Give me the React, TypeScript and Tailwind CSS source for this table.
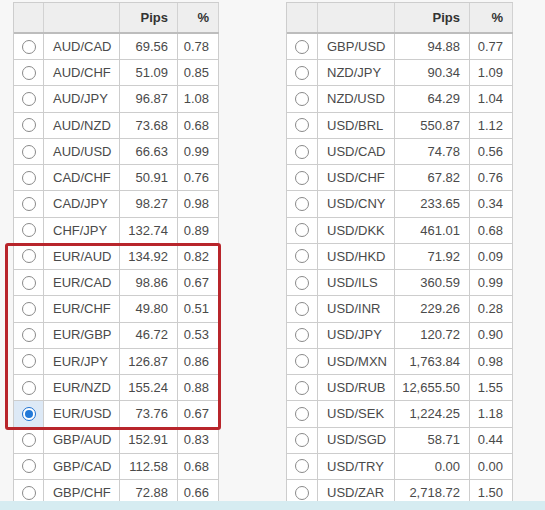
import React from "react";

type Row = { pair: string; pips: string; pct: string };

const left: Row[] = [
  { pair: "AUD/CAD", pips: "69.56", pct: "0.78" },
  { pair: "AUD/CHF", pips: "51.09", pct: "0.85" },
  { pair: "AUD/JPY", pips: "96.87", pct: "1.08" },
  { pair: "AUD/NZD", pips: "73.68", pct: "0.68" },
  { pair: "AUD/USD", pips: "66.63", pct: "0.99" },
  { pair: "CAD/CHF", pips: "50.91", pct: "0.76" },
  { pair: "CAD/JPY", pips: "98.27", pct: "0.98" },
  { pair: "CHF/JPY", pips: "132.74", pct: "0.89" },
  { pair: "EUR/AUD", pips: "134.92", pct: "0.82" },
  { pair: "EUR/CAD", pips: "98.86", pct: "0.67" },
  { pair: "EUR/CHF", pips: "49.80", pct: "0.51" },
  { pair: "EUR/GBP", pips: "46.72", pct: "0.53" },
  { pair: "EUR/JPY", pips: "126.87", pct: "0.86" },
  { pair: "EUR/NZD", pips: "155.24", pct: "0.88" },
  { pair: "EUR/USD", pips: "73.76", pct: "0.67" },
  { pair: "GBP/AUD", pips: "152.91", pct: "0.83" },
  { pair: "GBP/CAD", pips: "112.58", pct: "0.68" },
  { pair: "GBP/CHF", pips: "72.88", pct: "0.66" },
];

const right: Row[] = [
  { pair: "GBP/USD", pips: "94.88", pct: "0.77" },
  { pair: "NZD/JPY", pips: "90.34", pct: "1.09" },
  { pair: "NZD/USD", pips: "64.29", pct: "1.04" },
  { pair: "USD/BRL", pips: "550.87", pct: "1.12" },
  { pair: "USD/CAD", pips: "74.78", pct: "0.56" },
  { pair: "USD/CHF", pips: "67.82", pct: "0.76" },
  { pair: "USD/CNY", pips: "233.65", pct: "0.34" },
  { pair: "USD/DKK", pips: "461.01", pct: "0.68" },
  { pair: "USD/HKD", pips: "71.92", pct: "0.09" },
  { pair: "USD/ILS", pips: "360.59", pct: "0.99" },
  { pair: "USD/INR", pips: "229.26", pct: "0.28" },
  { pair: "USD/JPY", pips: "120.72", pct: "0.90" },
  { pair: "USD/MXN", pips: "1,763.84", pct: "0.98" },
  { pair: "USD/RUB", pips: "12,655.50", pct: "1.55" },
  { pair: "USD/SEK", pips: "1,224.25", pct: "1.18" },
  { pair: "USD/SGD", pips: "58.71", pct: "0.44" },
  { pair: "USD/TRY", pips: "0.00", pct: "0.00" },
  { pair: "USD/ZAR", pips: "2,718.72", pct: "1.50" },
];

function Radio({ checked }: { checked?: boolean }) {
  return checked ? (
    <span className="flex h-[14px] w-[14px] items-center justify-center rounded-full border border-[#1b6fd1] bg-white">
      <span className="h-[8px] w-[8px] rounded-full bg-[#2279d8]" />
    </span>
  ) : (
    <span className="h-[14px] w-[14px] rounded-full border border-[#8a8a8a] bg-white" />
  );
}

function PairTable({ rows, cols, selected }: { rows: Row[]; cols: string; selected?: string }) {
  return (
    <div className="border-l border-t border-[#cdcdcd] bg-white">
      <div className={`grid ${cols} h-[31px] border-b-2 border-[#bdbdbd] bg-[#eeeeee] font-bold text-[#333]`}>
        <div className="border-r border-[#d2d2d2]" />
        <div className="border-r border-[#d2d2d2]" />
        <div className="flex items-center justify-end border-r border-[#d2d2d2] px-[9px]">Pips</div>
        <div className="flex items-center justify-end border-r border-[#d2d2d2] px-[9px]">%</div>
      </div>
      {rows.map((r) => {
        const on = r.pair === selected;
        return (
          <div key={r.pair} className={`grid ${cols} h-[26.24px] border-b border-[#cdcdcd]`}>
            <div className={`flex items-center justify-center border-r border-[#cdcdcd] ${on ? "bg-[#dde9f6]" : ""}`}>
              <Radio checked={on} />
            </div>
            <div className="flex items-center border-r border-[#cdcdcd] px-[9px]">{r.pair}</div>
            <div className="flex items-center justify-end border-r border-[#cdcdcd] px-[9px]">{r.pips}</div>
            <div className="flex items-center justify-end border-r border-[#cdcdcd] px-[9px]">{r.pct}</div>
          </div>
        );
      })}
    </div>
  );
}

export default function App() {
  return (
    <div className="relative flex h-[510px] w-[545px] flex-col overflow-hidden bg-[#f7f7f7] font-['Liberation_Sans',Arial,sans-serif] text-[13px] text-[#4a4a4a]">
      <div className="flex h-[501px] items-start gap-[67px] overflow-hidden pl-[13px] pt-[2px]">
        <PairTable rows={left} cols="grid-cols-[30px_76px_58px_41px]" selected="EUR/USD" />
        <PairTable rows={right} cols="grid-cols-[31px_77px_75px_43px]" />
      </div>
      <div className="flex-1 bg-[#d6ecf1]" />
      <div className="absolute left-[5px] top-[243px] h-[187px] w-[216px] rounded-[3px] border-[3px] border-[#b8252b]" />
    </div>
  );
}
